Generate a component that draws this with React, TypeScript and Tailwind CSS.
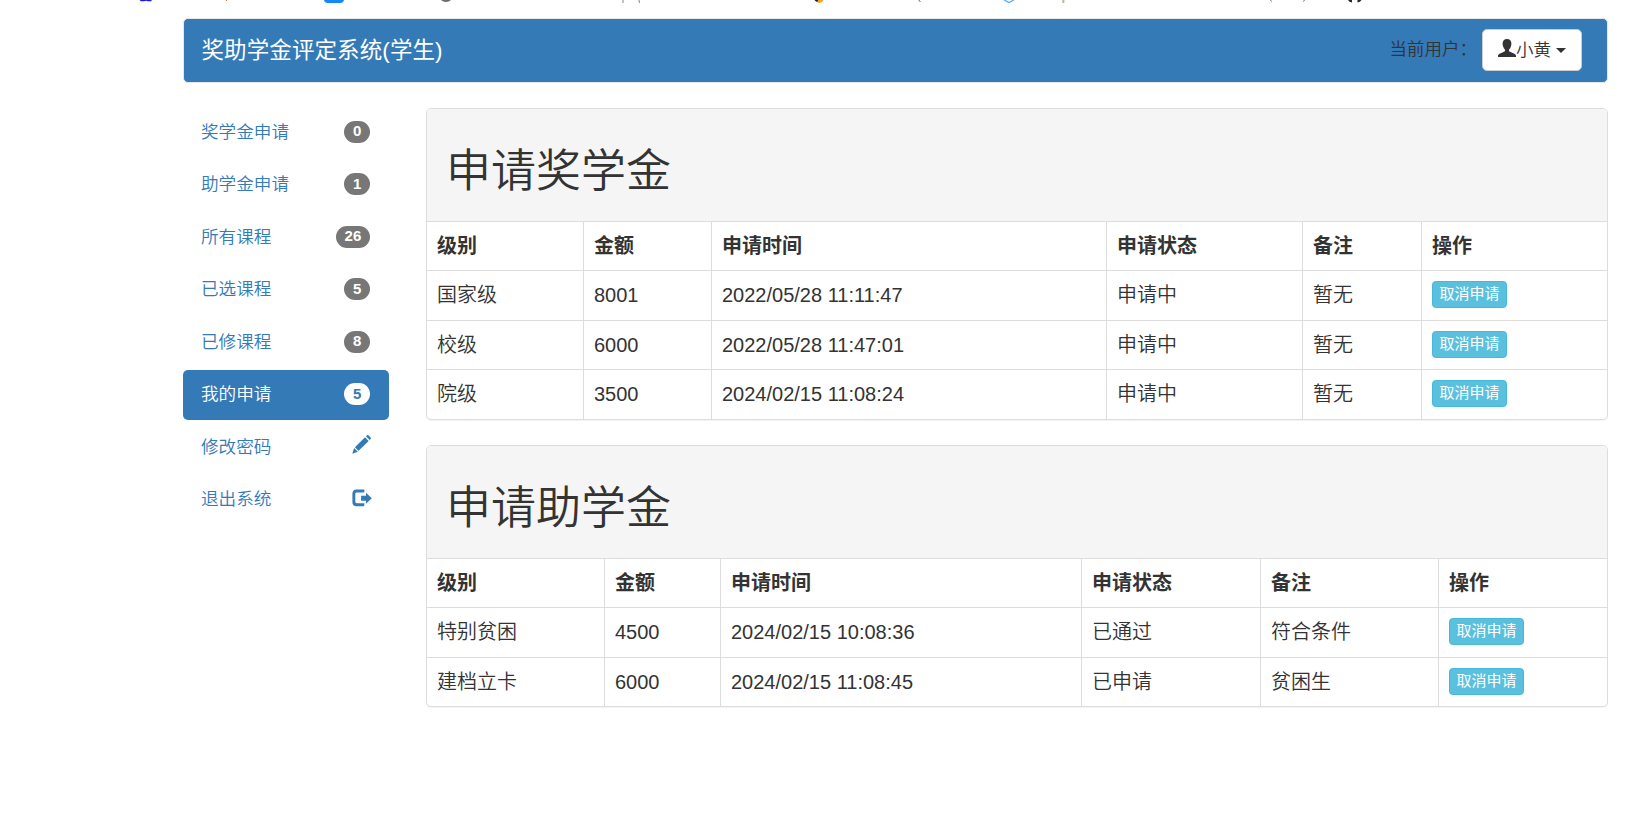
import React from "react";

type NavItem = { label: string; badge?: number; icon?: "pencil" | "logout"; active?: boolean };

const navItems: NavItem[] = [
  { label: "奖学金申请", badge: 0 },
  { label: "助学金申请", badge: 1 },
  { label: "所有课程", badge: 26 },
  { label: "已选课程", badge: 5 },
  { label: "已修课程", badge: 8 },
  { label: "我的申请", badge: 5, active: true },
  { label: "修改密码", icon: "pencil" },
  { label: "退出系统", icon: "logout" },
];

const headers = ["级别", "金额", "申请时间", "申请状态", "备注", "操作"];

function UserIcon() {
  return (
    <svg className="h-[18px] w-[18px] shrink-0" viewBox="0 0 18 18" fill="currentColor">
      <path d="M9 0C6.2 0 4.6 1.9 4.6 4.6c0 1 .2 1.9.5 2.8.4 1.3 1.1 2.2 1.8 3 .3 1.2 0 2-.9 2.4l-4.400 1.900C.500 15.200 0 15.900 0 16.900V18h18v-1.100c0-1-.5-1.700-1.600-2.200L12 12.800c-.9-.4-1.200-1.200-.9-2.400.7-.8 1.400-1.700 1.800-3 .3-.9.5-1.800.5-2.800C13.400 1.900 11.800 0 9 0z" />
    </svg>
  );
}

function PencilIcon() {
  return (
    <svg className="h-[19px] w-[19px]" viewBox="0 0 19 19" fill="currentColor">
      <path d="M14 1.200 15 .300q.7-.6 1.400 0l2.200 2.200q.6.7 0 1.400l-.9 1zM13 2.200l3.700 3.700L6.600 15.700 2.900 12.200zM2.100 13.100l3.700 3.600L.300 18.700z" />
    </svg>
  );
}

function LogoutIcon() {
  return (
    <svg className="h-[18px] w-[20px]" viewBox="0 0 20 18" fill="currentColor">
      <path d="M12.300.500H4.700C2 .500.400 2 .400 4.700v8.500c0 2.700 1.600 4.100 4.300 4.100h7.600v-3H5c-1.100 0-1.700-.6-1.700-1.700V5.200c0-1.100.6-1.700 1.700-1.700h7.300z" />
      <path d="M14 3.700v3H9.100v5H14v3l5.800-5.500z" />
    </svg>
  );
}

function BookmarkStrip() {
  return (
    <svg className="block h-[18px] w-full" viewBox="0 0 1630 18">
      <path d="M139.500 0h12.500l-1 1.300h-3l-2-.6-2 .6h-3z" fill="#1818df" />
      <path d="M226 0h1v1h-1z" fill="#c56b45" />
      <path d="M324 0h20q-.5 3-4 3h-12q-3.500 0-4-3z" fill="#1488fb" />
      <path d="M441 0h10q-2 2-5 2t-5-2z" fill="#686c70" />
      <path d="M623 0v3M639 0l.6 3" stroke="#999" strokeWidth="1.200" />
      <path d="M814.500 0h4v2q-3 0-4-2z" fill="#181818" />
      <path d="M818 0h5.500q-1.500 3-4 3-1.500 0-2-1z" fill="#f7a22b" />
      <path d="M919 0q0 1.500 1.500 1.500" fill="none" stroke="#7d6658" />
      <path d="M1004 0l5 2.500 5-2.500" fill="none" stroke="#4eadf5" strokeWidth="1.200" />
      <path d="M1062.500 0h1v3h-1z" fill="#c98946" />
      <path d="M1063.500 0h.8v3h-.8z" fill="#6caee4" />
      <path d="M1270.500 0l1 1.500M1304.500 0l-1 1.500" stroke="#766579" />
      <path d="M1348 0h4v2.500q-3-.5-4-2.500zM1357.500 0h4q-1 2-4 2.500z" fill="#24292f" />
    </svg>
  );
}

function Navbar() {
  return (
    <header className="ml-[183px] flex h-[65px] w-[1425px] items-start justify-between rounded-[5px] border border-[#e7e7e7] bg-[#337ab7]">
      <div className="pl-[17.5px] pt-[17px] text-[22.5px] font-normal leading-[30px] tracking-[0.1px] text-white">奖助学金评定系统(学生)</div>
      <div className="mr-[25px] mt-[10px] flex">
        <span className="mr-[5px] mt-[8px] text-[17.5px] leading-[25px] text-[#333]">当前用户：</span>
        <button className="flex h-[42px] w-[100px] items-center rounded-[5px] border border-[#ccc] bg-white pl-[15px] text-[17.5px] leading-[25px] text-[#333]">
          <span className="-mt-[5px]"><UserIcon /></span>
          <span>小黄</span>
          <span className="ml-[5px] mt-[1px] h-0 w-0 border-x-[5px] border-t-[5px] border-x-transparent border-t-[#333]" />
        </button>
      </div>
    </header>
  );
}

function Sidebar() {
  return (
    <nav className="flex w-[206px] shrink-0 flex-col gap-[2.5px]">
      {navItems.map((item) => (
        <a
          key={item.label}
          className={
            item.active
              ? "flex h-[50px] items-center justify-between rounded-[5px] bg-[#337ab7] pl-[18px] pr-[19px] text-[17.6px] text-white"
              : "flex h-[50px] items-center justify-between rounded-[5px] pl-[18px] pr-[19px] text-[17.6px] text-[#337ab7]"
          }
        >
          <span className="-mt-px leading-[25px]">{item.label}</span>
          {item.badge !== undefined && (
            <span
              className={
                item.active
                  ? "-mt-[2px] flex h-[22px] items-center rounded-full bg-white px-[8.75px] text-[15px] font-bold text-[#337ab7]"
                  : "-mt-[2px] flex h-[22px] items-center rounded-full bg-[#777] px-[8.75px] text-[15px] font-bold text-white"
              }
            >
              {item.badge}
            </span>
          )}
          {item.icon === "pencil" && <span className="-mr-px -mt-[6px]"><PencilIcon /></span>}
          {item.icon === "logout" && <span className="-mr-[2px] -mt-[5px]"><LogoutIcon /></span>}
        </a>
      ))}
    </nav>
  );
}

function Panel({ title, columns, rows, rowHeights }: { title: string; columns: string; rows: string[][]; rowHeights: string }) {
  return (
    <section className="w-[1182px] overflow-hidden rounded-[5px] border border-[#ddd] bg-white shadow-[0_1px_1px_rgba(0,0,0,0.05)]">
      <div className="h-[112px] bg-[#f5f5f5] pl-[19px] pt-[38px]">
        <h1 className="text-[45px] leading-[50px] text-[#333]">{title}</h1>
      </div>
      <div className={`grid ${rowHeights}`}>
        <div className={`grid ${columns} border-t border-[#ddd] font-bold`}>
          {headers.map((h) => (
            <div key={h} className="border-r border-[#ddd] pl-[10px] pt-[10px] leading-[28px] last:border-r-0">{h}</div>
          ))}
        </div>
        {rows.map((row) => (
          <div key={row[2]} className={`grid ${columns} border-t border-[#ddd]`}>
            {row.map((cell, i) => (
              <div key={i} className="border-r border-[#ddd] pl-[10px] pt-[10px] leading-[28px]">{cell}</div>
            ))}
            <div className="pl-[10px] pt-[10px]">
              <button className="flex h-[27px] w-[75px] items-center justify-center rounded-[3.75px] border border-[#46b8da] bg-[#5bc0de] pb-[2px] text-[15px] font-normal leading-none text-white">
                取消申请
              </button>
            </div>
          </div>
        ))}
      </div>
    </section>
  );
}

export default function App() {
  return (
    <div className="h-[832px] w-[1630px] overflow-hidden bg-white font-['Liberation_Sans','Noto_Sans_CJK_SC',sans-serif] text-[20px] font-[350] text-[#333]">
      <BookmarkStrip />
      <Navbar />
      <main className="ml-[183px] mt-[25px] flex">
        <div className="-mt-[0.5px]"><Sidebar /></div>
        <div className="ml-[37px] flex flex-col gap-[25px]">
          <Panel
            title="申请奖学金"
            columns="grid-cols-[157px_128px_395px_196px_119px_1fr]"
            rowHeights="grid-rows-[49px_50px_49px_50px]"
            rows={[
              ["国家级", "8001", "2022/05/28 11:11:47", "申请中", "暂无"],
              ["校级", "6000", "2022/05/28 11:47:01", "申请中", "暂无"],
              ["院级", "3500", "2024/02/15 11:08:24", "申请中", "暂无"],
            ]}
          />
          <Panel
            title="申请助学金"
            columns="grid-cols-[178px_116px_361px_179px_178px_1fr]"
            rowHeights="grid-rows-[49px_50px_49px]"
            rows={[
              ["特别贫困", "4500", "2024/02/15 10:08:36", "已通过", "符合条件"],
              ["建档立卡", "6000", "2024/02/15 11:08:45", "已申请", "贫困生"],
            ]}
          />
        </div>
      </main>
    </div>
  );
}
